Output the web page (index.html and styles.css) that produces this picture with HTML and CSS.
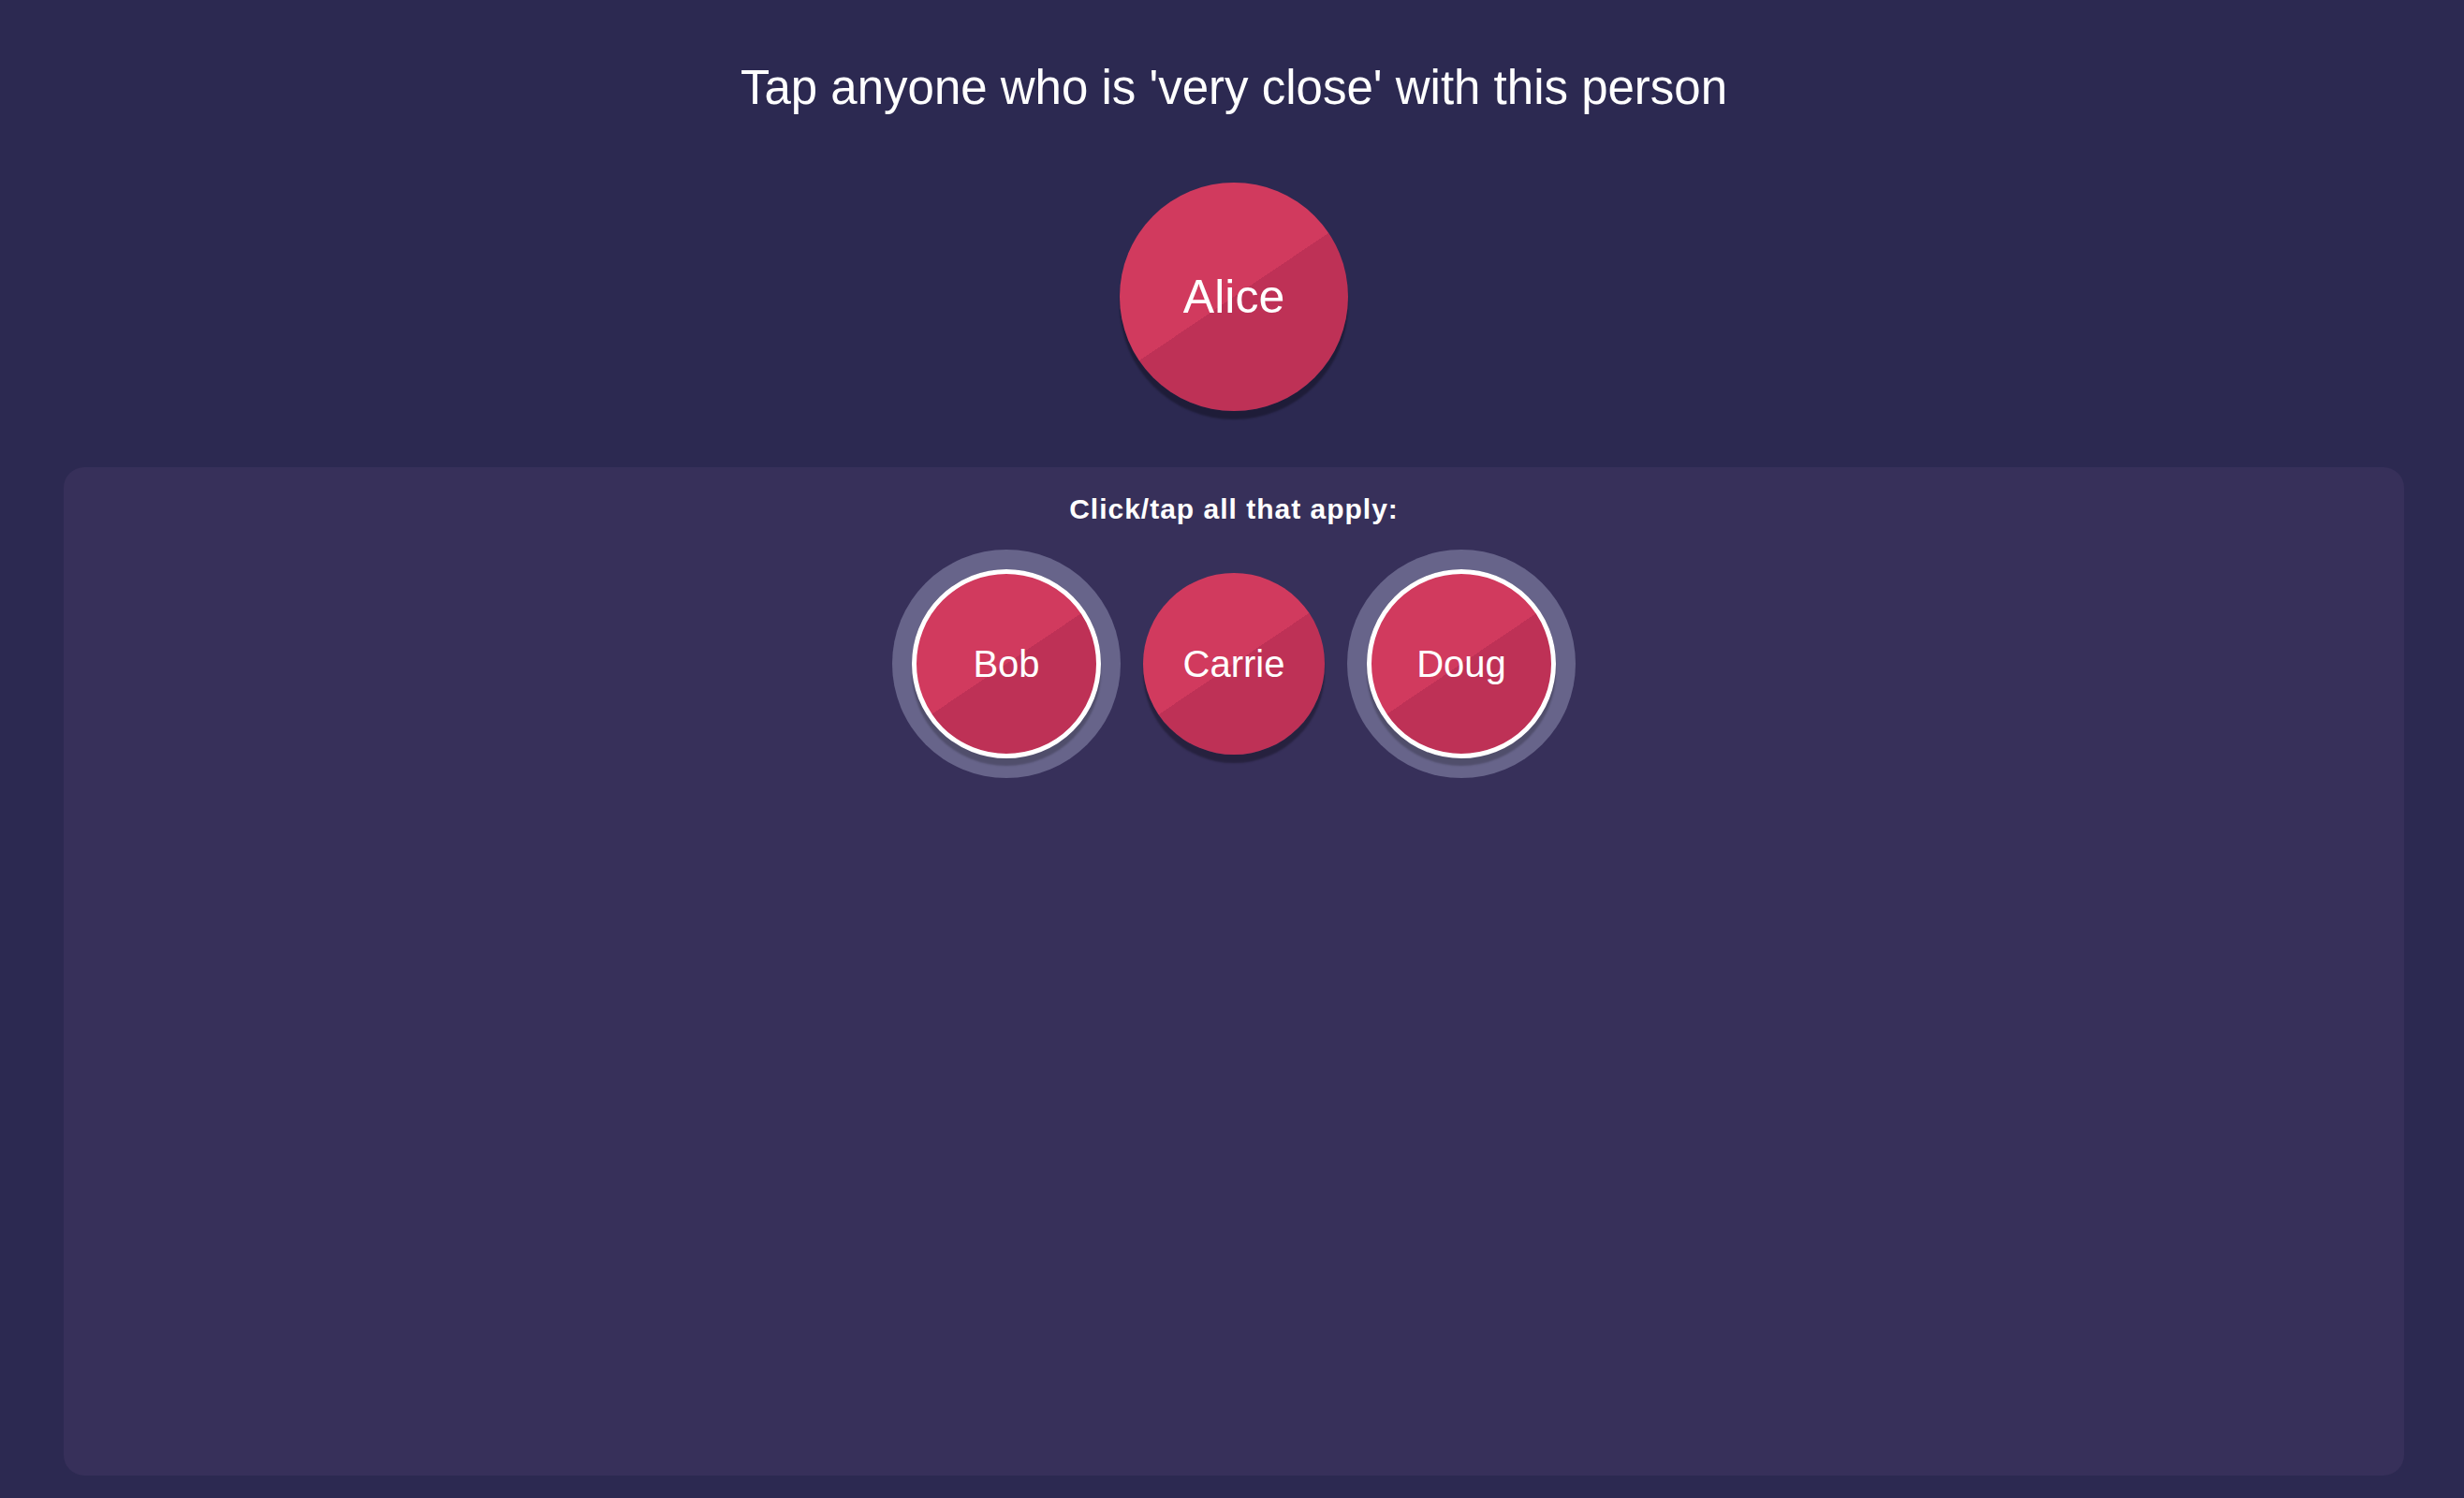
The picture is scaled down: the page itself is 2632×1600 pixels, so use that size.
FILE: index.html
```html
<!DOCTYPE html>
<html lang="en">
<head>
<meta charset="utf-8">
<title>Very close</title>
<link rel="stylesheet" href="styles.css">
</head>
<body>
<main class="page">
  <h1 class="prompt">Tap anyone who is 'very close' with this person</h1>
  <div class="subject">
    <div class="bubble bubble-lg">Alice</div>
  </div>
  <section class="panel">
    <h2 class="panel-title">Click/tap all that apply:</h2>
    <div class="choices">
      <div class="bubble bubble-sm selected">Bob</div>
      <div class="bubble bubble-sm">Carrie</div>
      <div class="bubble bubble-sm selected">Doug</div>
    </div>
  </section>
</main>
</body>
</html>
```

FILE: styles.css
```css
html, body {
  margin: 0;
  padding: 0;
  background: #2c2951;
  height: 100%;
}
body {
  font-family: "Liberation Sans", Arial, Helvetica, sans-serif;
  color: #ffffff;
}
.page {
  margin: 0 64px 0 68px;
  padding-top: 64px;
  display: flex;
  flex-direction: column;
  align-items: stretch;
}
.prompt {
  margin: 0;
  font-size: 51px;
  line-height: 60px;
  font-weight: normal;
  text-align: center;
  letter-spacing: 0;
}
.subject {
  display: flex;
  justify-content: center;
  margin-top: 71px;
}
.bubble {
  display: flex;
  align-items: center;
  justify-content: center;
  border-radius: 50%;
  color: #ffffff;
  background: linear-gradient(146deg, #d13a5e 50%, #be3156 50%);
  box-shadow: 0 9px 2px rgba(0, 0, 0, 0.3);
  flex: none;
}
.bubble-lg {
  width: 244px;
  height: 244px;
  font-size: 50px;
}
.panel {
  margin-top: 60px;
  height: 1077px;
  box-sizing: border-box;
  background: #37305a;
  border-radius: 22px;
  padding-top: 27px;
}
.panel-title {
  margin: 0;
  font-size: 30px;
  line-height: 36px;
  font-weight: bold;
  letter-spacing: 1px;
  text-align: center;
}
.choices {
  display: flex;
  justify-content: center;
  align-items: center;
  gap: 45px;
  height: 202px;
  margin-top: 46px;
}
.bubble-sm {
  width: 194px;
  height: 194px;
  font-size: 40px;
}
.bubble-sm.selected {
  width: 202px;
  height: 202px;
  box-sizing: border-box;
  border: 5px solid #ffffff;
  box-shadow: 0 8px 2px rgba(0, 0, 0, 0.22), 0 0 0 21px #67648a;
}
```
